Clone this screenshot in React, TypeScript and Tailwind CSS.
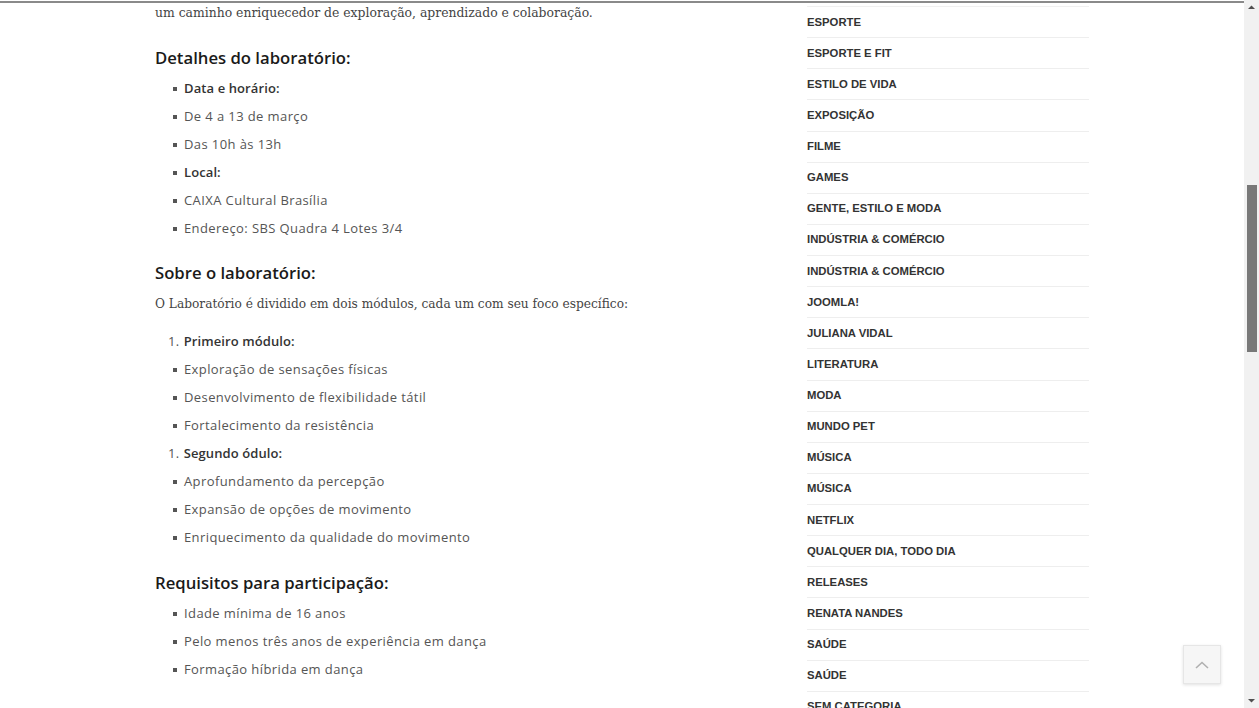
const CATEGORIES = [
  'Esporte',
  'Esporte e Fit',
  'Estilo de Vida',
  'Exposição',
  'Filme',
  'Games',
  'Gente, Estilo e Moda',
  'Indústria & Comércio',
  'Indústria & Comércio',
  'Joomla!',
  'Juliana Vidal',
  'Literatura',
  'Moda',
  'Mundo Pet',
  'Música',
  'Música',
  'Netflix',
  'Qualquer dia, todo dia',
  'Releases',
  'Renata Nandes',
  'Saúde',
  'Saúde',
  'Sem Categoria',
];

const serif = "font-['DejaVu_Serif','Liberation_Serif',serif]";
const sans = "font-['Open_Sans','Liberation_Sans',sans-serif]";

function Bullet({ children, bold }: { children: React.ReactNode; bold?: boolean }) {
  return (
    <li className="flex items-center h-[28px] pl-[18px]">
      <span className="w-[4px] h-[4px] bg-[#555] mr-[7px]" />
      <span className={bold ? 'font-semibold text-[#333] tracking-[0.1px]' : ''}>{children}</span>
    </li>
  );
}

function Numbered({ children }: { children: React.ReactNode }) {
  return (
    <li className="flex items-center h-[28px] pl-[13px]">
      <span className="mr-[4px]">1.</span>
      <span className="font-semibold text-[#333] tracking-[0.1px]">{children}</span>
    </li>
  );
}

export default function App() {
  return (
    <div className="h-[708px] w-full flex overflow-hidden bg-white">
      <div className="flex-1 flex flex-col overflow-hidden">
        <div className="h-[3px] border-b-2 border-[#8a8a8a] shrink-0" />
        <div className="w-[934px] mx-auto flex justify-between">
          {/* Article */}
          <article className={`w-[620px] ${sans} text-[13px] text-[#555] tracking-[0.4px]`}>
            <p className={`${serif} text-[12.4px] leading-[24px] text-[#444] tracking-normal -mt-[2px]`}>
              um caminho enriquecedor de exploração, aprendizado e colaboração.
            </p>

            <h3 className="mt-[21px] text-[16.7px] leading-[24px] font-semibold text-[#1a1a1a] tracking-normal">
              Detalhes do laboratório:
            </h3>
            <ul className="mt-[5px]">
              <Bullet bold>Data e horário:</Bullet>
              <Bullet>De 4 a 13 de março</Bullet>
              <Bullet>Das 10h às 13h</Bullet>
              <Bullet bold>Local:</Bullet>
              <Bullet>CAIXA Cultural Brasília</Bullet>
              <Bullet>Endereço: SBS Quadra 4 Lotes 3/4</Bullet>
            </ul>

            <h3 className="mt-[18px] text-[16.7px] leading-[24px] font-semibold text-[#1a1a1a] tracking-normal">
              Sobre o laboratório:
            </h3>
            <p className={`${serif} mt-[7px] text-[12.2px] leading-[24px] text-[#444] tracking-normal`}>
              O Laboratório é dividido em dois módulos, cada um com seu foco específico:
            </p>
            <ul className="mt-[12px]">
              <Numbered>Primeiro módulo:</Numbered>
              <Bullet>Exploração de sensações físicas</Bullet>
              <Bullet>Desenvolvimento de flexibilidade tátil</Bullet>
              <Bullet>Fortalecimento da resistência</Bullet>
              <Numbered>Segundo ódulo:</Numbered>
              <Bullet>Aprofundamento da percepção</Bullet>
              <Bullet>Expansão de opções de movimento</Bullet>
              <Bullet>Enriquecimento da qualidade do movimento</Bullet>
            </ul>

            <h3 className="mt-[19px] text-[16.7px] leading-[24px] font-semibold text-[#1a1a1a] tracking-normal">
              Requisitos para participação:
            </h3>
            <ul className="mt-[5px]">
              <Bullet>Idade mínima de 16 anos</Bullet>
              <Bullet>Pelo menos três anos de experiência em dança</Bullet>
              <Bullet>Formação híbrida em dança</Bullet>
            </ul>

            <h3 className="mt-[19px] text-[16.7px] leading-[24px] font-semibold text-[#1a1a1a] tracking-normal">
              Informações:
            </h3>
          </article>

          {/* Sidebar categories */}
          <aside className="w-[282px] pt-[3px]">
            <ul className="border-t border-[#f0f0f0] font-['Liberation_Sans',Arial,sans-serif]">
              {CATEGORIES.map((c, i) => (
                <li
                  key={i}
                  className="h-[31.14px] flex items-center border-b border-[#eeeeee] text-[11.3px] font-bold uppercase text-[#333]"
                >
                  {c}
                </li>
              ))}
            </ul>
          </aside>
        </div>
      </div>

      {/* Scrollbar */}
      <div className="w-[15px] shrink-0 bg-[#f1f1f1] flex flex-col items-center">
        <svg width="15" height="15" viewBox="0 0 15 15" className="shrink-0">
          <path d="M4 9 L7.5 5.5 L11 9 Z" fill="#505050" />
        </svg>
        <div className="h-[170px] shrink-0" />
        <div className="w-[10px] h-[167px] bg-[#787878] shrink-0" />
        <div className="flex-1" />
        <svg width="15" height="15" viewBox="0 0 15 15" className="shrink-0">
          <path d="M4 6 L7.5 9.5 L11 6 Z" fill="#505050" />
        </svg>
      </div>

      {/* Back to top */}
      <button className="absolute left-[1183px] top-[645px] w-[38px] h-[39px] bg-[#f6f6f6] border border-[#e6e6e6] shadow-[0_1px_3px_rgba(0,0,0,0.12)] flex items-center justify-center">
        <svg width="16" height="10" viewBox="0 0 16 10" fill="none">
          <path d="M2 8 L8 2.5 L14 8" stroke="#b0b0b0" strokeWidth="1.6" />
        </svg>
      </button>
    </div>
  );
}
